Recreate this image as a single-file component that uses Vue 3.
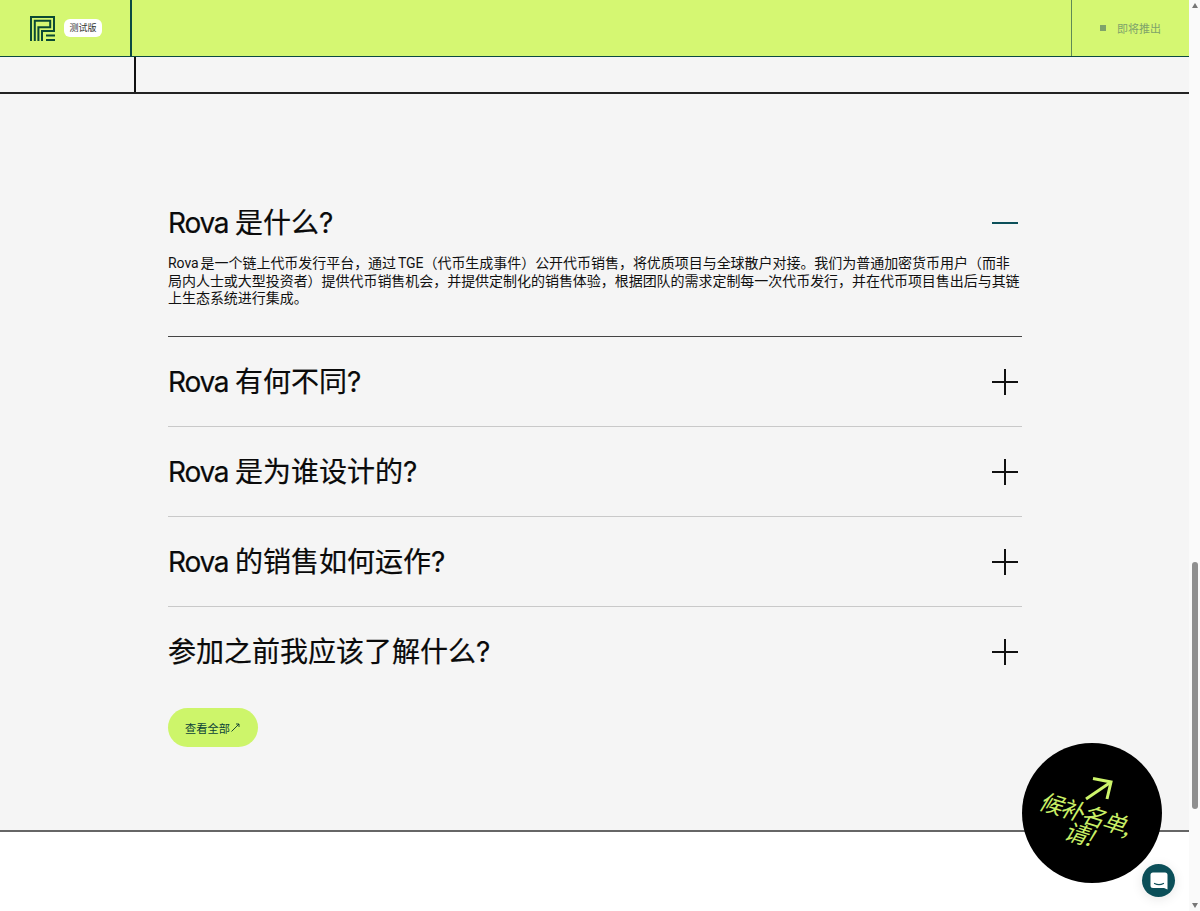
<script setup>
const items = [
  { lat: 'Rova ', q: '有何不同?' },
  { lat: 'Rova ', q: '是为谁设计的?' },
  { lat: 'Rova ', q: '的销售如何运作?' },
  { lat: '', q: '参加之前我应该了解什么?' }
]
</script>

<template>
  <div class="page">
    <div class="content">
      <header class="topbar">
        <div class="brand">
          <svg class="logo" width="25" height="25" viewBox="0 0 25 25" fill="none" stroke="#0b4a34" stroke-width="2">
            <path d="M1 25V1H24V15H12V25" />
            <path d="M4.8 25V4.8H20.2V11.2H8.4V25" />
            <path d="M16 19.5H25M16 24H25" />
          </svg>
          <span class="badge">测试版</span>
        </div>
        <div class="bar-mid"></div>
        <div class="soon"><i class="dot"></i><span>即将推出</span></div>
      </header>
      <div class="subbar"><div class="subcell"></div></div>

      <section class="faq">
        <div class="item open">
          <div class="row">
            <h3><span class="lat">Rova </span>是什么?</h3>
            <span class="minus"></span>
          </div>
          <p>Rova 是一个链上代币发行平台，通过 TGE（代币生成事件）公开代币销售，将优质项目与全球散户对接。我们为普通加密货币用户（而非局内人士或大型投资者）提供代币销售机会，并提供定制化的销售体验，根据团队的需求定制每一次代币发行，并在代币项目售出后与其链上生态系统进行集成。</p>
        </div>
        <div v-for="it in items" :key="it.q" class="item">
          <div class="row">
            <h3><span class="lat">{{ it.lat }}</span>{{ it.q }}</h3>
            <span class="plus"></span>
          </div>
        </div>
        <button class="all">查看全部<svg width="9" height="9" viewBox="0 0 9 9" fill="none" stroke="#0b3a30" stroke-width="0.9"><path d="M0.5 8.5L8 1M5 1H8V4" /></svg></button>
      </section>
      <div class="footer"></div>
    </div>

    <div class="scrollbar">
      <i class="arrow up"></i>
      <div class="track"><div class="thumb"></div></div>
      <i class="arrow down"></i>
    </div>

    <div class="wait">
      <svg class="wait-arrow" width="34" height="26" viewBox="0 0 34 26" fill="none" stroke="#cdf56a" stroke-width="3">
        <path d="M4 23L29 6" />
        <path d="M11 2.5L29 6L25 23" />
      </svg>
      <div class="wait-text">候补名单,<br />请!</div>
    </div>
    <div class="chat">
      <svg width="18" height="18" viewBox="0 0 18 18"><path d="M3 0.5H15A2.5 2.5 0 0 1 17.5 3V17.5L14 16H3A2.5 2.5 0 0 1 0.5 13.5V3A2.5 2.5 0 0 1 3 0.5Z" fill="#fff"/><path d="M4.5 11.5Q9 13.7 13.5 11.5" stroke="#0b4f59" stroke-width="1.2" fill="none" stroke-linecap="round"/></svg>
    </div>
  </div>
</template>

<style scoped>
.page { position: relative; width: 1200px; height: 911px; overflow: hidden; background: #fff; font-family: Inter, "Noto Sans CJK SC", sans-serif; color: #0a0a0a; }
.content { width: 1189px; }
.topbar { height: 56px; background: #d5f772; border-bottom: 1.5px solid #0b4a42; display: flex; box-sizing: content-box; }
.brand { width: 132px; box-sizing: border-box; border-right: 2px solid #0b4a42; display: flex; align-items: center; padding-left: 30px; gap: 9px; }
.logo { display: block; }
.badge { background: #fff; border-radius: 6px; font-size: 9px; color: #333; height: 18px; line-height: 18px; padding: 0 5.5px; }
.bar-mid { flex: 1; }
.soon { width: 118px; box-sizing: border-box; border-left: 1px solid #5f8a55; display: flex; align-items: center; padding-left: 28px; gap: 11px; font-size: 11px; color: #7fa36a; }
.dot { width: 6px; height: 6px; background: #7fa36a; display: block; }
.subbar { height: 35px; background: #f5f5f5; border-bottom: 2px solid #222; }
.subcell { width: 136px; height: 100%; box-sizing: border-box; border-right: 2px solid #111; }
.faq { background: #f5f5f5; height: 738px; box-sizing: border-box; padding: 84px 167px 0 168px; border-bottom: 2px solid #666; }
.item { border-bottom: 1px solid #c9c9c9; }
.item.open { border-bottom-color: #444; padding-bottom: 28.5px; }
.item:last-of-type { border-bottom: none; }
.row { display: flex; justify-content: space-between; align-items: center; height: 89px; }
h3 { margin: 0; font-size: 28px; font-weight: 400; line-height: 32px; -webkit-text-stroke: 0.2px #0a0a0a; }
h3 .lat { letter-spacing: -1.2px; }
p { margin: -12px 0 0; font-family: Roboto, "Noto Sans CJK SC", sans-serif; font-size: 14px; line-height: 17.5px; color: #111; letter-spacing: -0.04px; word-spacing: -1.5px; }
.minus { width: 26px; height: 2px; margin-right: 4px; background: #0b4f59; }
.plus { position: relative; width: 26px; height: 26px; margin-right: 4px; }
.plus::before { content: ""; position: absolute; left: 0; right: 0; top: 12px; height: 2px; background: #111; }
.plus::after { content: ""; position: absolute; top: 0; bottom: 0; left: 12px; width: 2px; background: #111; }
.all { margin: 12px 0 0 -0.5px; height: 39px; width: 90px; border: 0; border-radius: 20px; background: #cdf56a; font-family: inherit; font-size: 11.2px; color: #0b4238; display: flex; align-items: center; justify-content: center; gap: 1px; padding: 0; }
.footer { height: 79px; background: #fff; }
.scrollbar { position: absolute; top: 0; right: 0; bottom: 0; width: 11px; background: #fafafa; display: flex; flex-direction: column; align-items: center; }
.track { flex: 1; width: 100%; position: relative; }
.thumb { position: absolute; left: 3px; width: 6px; top: 551px; height: 247px; background: #8f8f8f; border-radius: 3px; }
.arrow { display: block; width: 0; height: 0; border-left: 3.5px solid transparent; border-right: 3.5px solid transparent; margin: 3px 0; }
.arrow.up { border-bottom: 5px solid #777; }
.arrow.down { border-top: 5px solid #777; }
.wait { position: absolute; left: 1022px; top: 743px; width: 140px; height: 140px; border-radius: 50%; background: #000; color: #c9ef66; }
.wait-arrow { position: absolute; left: 60px; top: 33px; }
.wait-text { position: absolute; left: -10px; right: 10px; top: 59px; text-align: center; font-size: 23px; line-height: 21px; letter-spacing: -1px; font-style: italic; font-family: "Noto Sans CJK SC", sans-serif; transform: rotate(17deg); font-weight: 400; }
.chat { position: absolute; left: 1142px; top: 864px; width: 33px; height: 33px; border-radius: 50%; background: #0b4f59; display: flex; align-items: center; justify-content: center; box-shadow: 0 2px 12px rgba(0,0,0,.1); }
</style>
